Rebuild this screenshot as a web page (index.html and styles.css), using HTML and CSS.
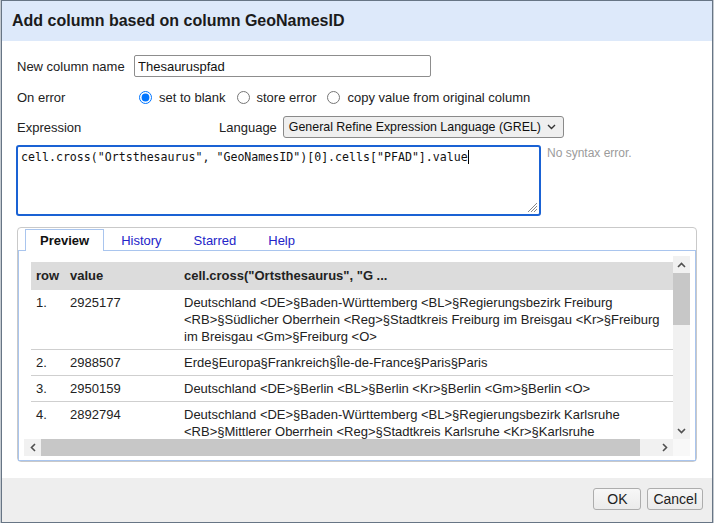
FILE: index.html
```html
<!DOCTYPE html>
<html>
<head>
<meta charset="utf-8">
<link rel="stylesheet" href="styles.css">
</head>
<body>
<div class="dialog">
  <div class="titlebar">Add column based on column GeoNamesID</div>
  <div class="content">
    <div class="row row-name">
      <label class="lbl">New column name</label>
      <input class="name-input" type="text" value="Thesauruspfad">
    </div>
    <div class="row row-error">
      <span class="lbl">On error</span>
      <label class="opt"><input class="radio" type="radio" name="onerror" checked>set to blank</label>
      <label class="opt"><input class="radio" type="radio" name="onerror">store error</label>
      <label class="opt"><input class="radio" type="radio" name="onerror">copy value from original column</label>
    </div>
    <div class="row row-expr">
      <span class="lbl">Expression</span>
      <span class="lang-lbl">Language</span>
      <div class="select">
        <span class="select-text">General Refine Expression Language (GREL)</span>
        <svg class="chev" width="9" height="6" viewBox="0 0 9 6"><polyline points="1,1 4.5,4.5 8,1" fill="none" stroke="#333" stroke-width="1.4"/></svg>
      </div>
    </div>
    <div class="expr-row">
      <div class="expr">cell.cross("Ortsthesaurus", "GeoNamesID")[0].cells["PFAD"].value<span class="caret"></span>
        <svg class="grip" width="12" height="12" viewBox="0 0 12 12"><line x1="11" y1="2" x2="2" y2="11" stroke="#888" stroke-width="1"/><line x1="11" y1="5" x2="5" y2="11" stroke="#888" stroke-width="1"/><line x1="11" y1="8" x2="8" y2="11" stroke="#888" stroke-width="1"/></svg>
      </div>
      <div class="status">No syntax error.</div>
    </div>
    <div class="tabs">
      <ul class="tab-strip">
        <li class="tab active">Preview</li>
        <li class="tab">History</li>
        <li class="tab">Starred</li>
        <li class="tab">Help</li>
      </ul>
      <div class="tab-panel">
        <div class="scroller">
          <div class="viewport">
            <table class="preview">
              <colgroup><col class="c-row"><col class="c-val"><col class="c-res"></colgroup>
              <thead>
                <tr><th>row</th><th>value</th><th>cell.cross("Ortsthesaurus", "G ...</th></tr>
              </thead>
              <tbody>
                <tr><td>1.</td><td>2925177</td><td>Deutschland &lt;DE&gt;§Baden-Württemberg &lt;BL&gt;§Regierungsbezirk Freiburg &lt;RB&gt;§Südlicher Oberrhein &lt;Reg&gt;§Stadtkreis Freiburg im Breisgau &lt;Kr&gt;§Freiburg im Breisgau &lt;Gm&gt;§Freiburg &lt;O&gt;</td></tr>
                <tr><td>2.</td><td>2988507</td><td>Erde§Europa§Frankreich§Île-de-France§Paris§Paris</td></tr>
                <tr><td>3.</td><td>2950159</td><td>Deutschland &lt;DE&gt;§Berlin &lt;BL&gt;§Berlin &lt;Kr&gt;§Berlin &lt;Gm&gt;§Berlin &lt;O&gt;</td></tr>
                <tr><td>4.</td><td>2892794</td><td>Deutschland &lt;DE&gt;§Baden-Württemberg &lt;BL&gt;§Regierungsbezirk Karlsruhe &lt;RB&gt;§Mittlerer Oberrhein &lt;Reg&gt;§Stadtkreis Karlsruhe &lt;Kr&gt;§Karlsruhe &lt;Gm&gt;§Karlsruhe &lt;O&gt;</td></tr>
              </tbody>
            </table>
          </div>
          <div class="vbar">
            <div class="arrow"><svg width="9" height="6" viewBox="0 0 9 6"><polyline points="1,5 4.5,1.5 8,5" fill="none" stroke="#505050" stroke-width="1.6"/></svg></div>
            <div class="vthumb"></div>
            <div class="vtrack"></div>
            <div class="arrow"><svg width="9" height="6" viewBox="0 0 9 6"><polyline points="1,1 4.5,4.5 8,1" fill="none" stroke="#505050" stroke-width="1.6"/></svg></div>
          </div>
          <div class="hbar">
            <div class="arrow"><svg width="6" height="9" viewBox="0 0 6 9"><polyline points="5,1 1.5,4.5 5,8" fill="none" stroke="#505050" stroke-width="1.6"/></svg></div>
            <div class="hthumb"></div>
            <div class="htrack"></div>
            <div class="arrow"><svg width="6" height="9" viewBox="0 0 6 9"><polyline points="1,1 4.5,4.5 1,8" fill="none" stroke="#505050" stroke-width="1.6"/></svg></div>
          </div>
          <div class="corner"></div>
        </div>
      </div>
    </div>
  </div>
  <div class="footer">
    <button class="btn btn-ok">OK</button>
    <button class="btn">Cancel</button>
  </div>
</div>
</body>
</html>
```
FILE: styles.css
```css
html, body {
  margin: 0;
  padding: 0;
}
body {
  background: #c4cad0;
  font-family: "Liberation Sans", Arial, sans-serif;
  font-size: 13px;
  color: #222;
}
.dialog {
  width: 710px;
  height: 521px;
  margin-left: 1px;
  border: 1px solid #677585;
  background: #fff;
  display: flex;
  flex-direction: column;
}
.titlebar {
  height: 40px;
  flex: none;
  background: #dde9fa;
  padding-left: 10px;
  display: flex;
  align-items: center;
  font-weight: bold;
  font-size: 16px;
  color: #1b1b1b;
}
.content {
  flex: 1;
  padding: 14px 15px 0 15px;
}
.row {
  display: flex;
  align-items: center;
  height: 22px;
}
.row-error { margin-top: 9px; }
.row-expr { margin-top: 8px; }
.lbl {
  width: 117px;
  flex: none;
}
.name-input {
  width: 297px;
  height: 22px;
  box-sizing: border-box;
  border: 1px solid #8d8d8d;
  border-radius: 2px;
  padding: 0 3px;
  margin: 0;
  font-family: "Liberation Sans", Arial, sans-serif;
  font-size: 13px;
  color: #111;
}
.opt {
  display: flex;
  align-items: center;
}
.opt + .opt { margin-left: 6px; }
.radio {
  width: 13px;
  height: 13px;
  margin: 0 7px 0 5px;
}
.lang-lbl {
  margin-left: 85px;
  margin-right: 6px;
}
.select {
  width: 281px;
  height: 22px;
  box-sizing: border-box;
  border: 1px solid #8a8a8a;
  border-radius: 3px;
  background: #efefef;
  display: flex;
  align-items: center;
  padding: 0 7px 0 5px;
  color: #111;
}
.select-text {
  flex: 1;
  white-space: nowrap;
  font-size: 12.4px;
}
.chev {
  flex: none;
  margin-left: 2px;
}
.expr-row {
  display: flex;
  margin-top: 7px;
  margin-left: -1px;
}
.expr {
  position: relative;
  width: 525px;
  height: 71px;
  box-sizing: border-box;
  border: 2px solid #1a62d4;
  border-radius: 3px;
  padding: 3px 3px;
  font-family: "DejaVu Sans Mono", "Liberation Mono", monospace;
  font-size: 11.6px;
  line-height: 15px;
  color: #111;
  white-space: pre;
}
.caret {
  display: inline-block;
  width: 1px;
  height: 14px;
  background: #000;
  vertical-align: -3px;
}
.grip {
  position: absolute;
  right: 1px;
  bottom: 1px;
}
.status {
  margin-left: 6px;
  color: #9b9b9b;
  font-size: 12px;
  line-height: 15px;
  padding-top: 1px;
}
.tabs {
  margin-top: 11px;
  width: 678px;
  border: 1px solid #c9c9c9;
  border-radius: 4px;
}
.tab-strip {
  list-style: none;
  margin: 0;
  padding: 1px 0 0 7px;
  display: flex;
  height: 21px;
}
.tab {
  height: 22px;
  box-sizing: border-box;
  padding: 0 14px;
  margin-right: 2px;
  border: 1px solid transparent;
  border-bottom: none;
  display: flex;
  align-items: center;
  color: #2424c8;
  position: relative;
  z-index: 1;
}
.tab.active {
  border-color: #a9c5ee;
  background: #fff;
  color: #111;
  font-weight: bold;
}
.tab-panel {
  border: 1px solid #a9c5ee;
  padding: 5px 4px 4px 5px;
}
.scroller {
  display: grid;
  grid-template-columns: 649px 17px;
  grid-template-rows: 183px 17px;
  width: 666px;
}
.viewport {
  overflow: hidden;
  padding: 6px 0 0 7px;
}
.preview {
  border-collapse: collapse;
  table-layout: fixed;
  width: 642px;
}
.c-row { width: 34px; }
.c-val { width: 114px; }
.c-res { width: 494px; }
.preview th {
  background: #dcdcdc;
  text-align: left;
  font-weight: bold;
  padding: 5px 5px 6px 5px;
  line-height: 17px;
  white-space: nowrap;
  overflow: hidden;
  color: #222;
}
.preview td {
  vertical-align: top;
  padding: 4px 5px 4px 5px;
  line-height: 17px;
  border-bottom: 1px solid #cfcfcf;
  color: #222;
}
.vbar {
  background: #f1f1f1;
  display: flex;
  flex-direction: column;
}
.vbar .arrow {
  height: 17px;
  display: flex;
  align-items: center;
  justify-content: center;
  flex: none;
}
.vthumb {
  height: 52px;
  background: #c7c7c7;
  flex: none;
}
.vtrack { flex: 1; }
.hbar {
  background: #f1f1f1;
  display: flex;
}
.hbar .arrow {
  width: 17px;
  display: flex;
  align-items: center;
  justify-content: center;
  flex: none;
}
.hthumb {
  width: 599px;
  background: #c7c7c7;
  flex: none;
}
.htrack { flex: 1; }
.corner { background: #f8f8f8; }
.footer {
  height: 44px;
  flex: none;
  background: #eeeeee;
  display: flex;
  justify-content: flex-end;
  align-items: flex-start;
  padding: 10px 9px 0 0;
  box-sizing: border-box;
  gap: 6px;
}
.btn {
  height: 22px;
  box-sizing: border-box;
  border: 1px solid #adadad;
  border-radius: 3px;
  background: linear-gradient(#f7f7f7, #ebebeb);
  font-family: "Liberation Sans", Arial, sans-serif;
  font-size: 14px;
  color: #222;
  padding: 0 5px;
  margin: 0;
}
.btn-ok { min-width: 48px; }
```
